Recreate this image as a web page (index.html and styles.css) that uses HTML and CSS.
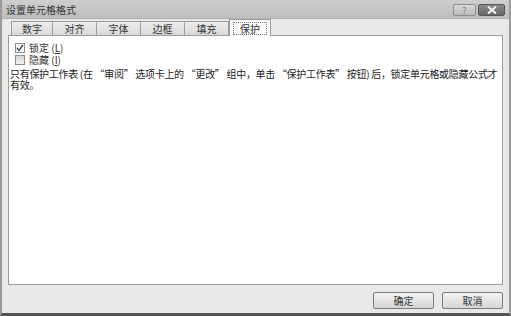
FILE: index.html
```html
<!DOCTYPE html>
<html lang="zh-CN">
<head>
    <meta charset="UTF-8">
    <title>设置单元格格式</title>
    <link rel="stylesheet" href="styles.css">
</head>
<body>
    <div class="window">
        <div class="titlebar">
            <span class="title">设置单元格格式</span>
            <div class="controls">
                <span class="ctl help">?</span>
                <span class="ctl close">
                    <svg width="10" height="8" viewBox="0 0 10 8"><path d="M1 0.5 L9 7.5 M9 0.5 L1 7.5" stroke="#f4f4f4" stroke-width="2"/></svg>
                </span>
            </div>
        </div>
        <div class="body">
            <div class="tabs">
                <span class="tab">数字</span>
                <span class="tab">对齐</span>
                <span class="tab">字体</span>
                <span class="tab">边框</span>
                <span class="tab">填充</span>
                <span class="tab active"><span class="focus">保护</span></span>
            </div>
            <div class="panel">
                <label class="check"><span class="box checked">
                    <svg width="8" height="8" viewBox="0 0 8 8"><path d="M1 4 L3 6.5 L7 1" stroke="#444" stroke-width="1.3" fill="none"/></svg>
                </span>锁定 (<u>L</u>)</label>
                <label class="check"><span class="box"></span>隐藏 (<u>I</u>)</label>
                <p class="note">只有保护工作表 (在 “审阅” 选项卡上的 “更改” 组中，单击 “保护工作表” 按钮) 后，锁定单元格或隐藏公式才<br>有效。</p>
            </div>
            <div class="footer">
                <button class="btn">确定</button>
                <button class="btn">取消</button>
            </div>
        </div>
    </div>
</body>
</html>
```

FILE: styles.css
```css
html, body {
    margin: 0;
    padding: 0;
}
body {
    width: 511px;
    height: 316px;
    overflow: hidden;
    font-family: "Noto Sans CJK SC", "Liberation Sans", sans-serif;
    font-size: 10px;
    color: #222;
    background: #e8e8e8;
}
.window {
    box-sizing: border-box;
    width: 511px;
    height: 316px;
    display: flex;
    flex-direction: column;
    background: #e9e9e9;
    border-left: 2px solid #9a9a9a;
    border-right: 2px solid #9a9a9a;
    border-bottom: 3px solid #555;
}
.titlebar {
    height: 18px;
    display: flex;
    align-items: center;
    justify-content: space-between;
    padding: 0 4px;
    background: linear-gradient(#cfcfcf, #bdbdbd);
    border-bottom: 1px solid #b0b0b0;
}
.title {
    font-size: 10px;
    line-height: 12px;
    color: #333;
    margin-top: 1px;
}
.controls {
    display: flex;
    gap: 2px;
    margin-top: 2px;
}
.ctl {
    box-sizing: border-box;
    height: 12px;
    display: flex;
    align-items: center;
    justify-content: center;
    border: 1px solid #8c8c8c;
    border-radius: 2px;
}
.help {
    width: 23px;
    background: linear-gradient(#d8d8d8, #bcbcbc);
    color: #777;
    font-size: 9px;
    line-height: 1;
}
.close {
    width: 27px;
    background: linear-gradient(#8a8a8a, #6a6a6a);
    border-color: #555;
}
.body {
    flex: 1;
    display: flex;
    flex-direction: column;
    padding: 0 6px;
}
.tabs {
    display: flex;
    align-items: flex-end;
    height: 15px;
    padding-left: 3px;
    margin-top: 1px;
}
.tab {
    box-sizing: border-box;
    height: 14px;
    width: 45px;
    display: flex;
    align-items: center;
    justify-content: center;
    line-height: 12px;
    background: linear-gradient(#ededed, #d9d9d9);
    border: 1px solid #9c9c9c;
    border-bottom: none;
    margin-right: -1px;
    color: #333;
}
.tab:first-child {
    width: 42px;
}
.tab.active {
    height: 17px;
    width: 42px;
    background: #fafafa;
    margin-left: 1px;
    position: relative;
    top: 1px;
    z-index: 1;
}
.focus {
    border: 1px dotted #777;
    padding: 0 6px;
    line-height: 11px;
}
.panel {
    box-sizing: border-box;
    height: 250px;
    background: #fff;
    border: 1px solid #9c9c9c;
    padding: 6px 4px 0 1px;
}
.check {
    display: flex;
    align-items: center;
    height: 12px;
    line-height: 12px;
    margin-left: 5px;
    color: #333;
}
.check u {
    text-decoration: underline;
}
.box {
    box-sizing: border-box;
    width: 10px;
    height: 10px;
    border: 1px solid #8e8e8e;
    background: linear-gradient(#d6d6d6, #f3f3f3);
    margin-right: 4px;
    display: flex;
    align-items: center;
    justify-content: center;
}
.box.checked {
    background: #f6f6f6;
}
.note {
    margin: 2px 0 0 0;
    line-height: 11px;
    font-size: 10px;
    letter-spacing: -0.3px;
    color: #1a1a1a;
}
.footer {
    display: flex;
    justify-content: flex-end;
    gap: 8px;
    padding: 7px 0 0 0;
}
.btn {
    box-sizing: border-box;
    width: 61px;
    height: 17px;
    padding: 0;
    font-family: inherit;
    font-size: 10px;
    line-height: 12px;
    color: #333;
    background: linear-gradient(#f3f3f3, #d6d6d6);
    border: 1px solid #7a7a7a;
    border-radius: 2px;
}
```
